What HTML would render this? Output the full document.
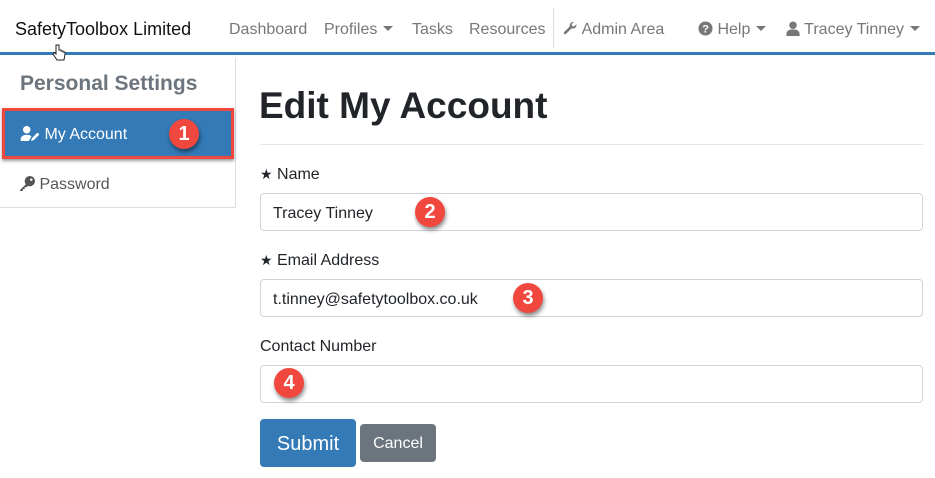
<!DOCTYPE html>
<html><head><meta charset="utf-8"><style>
*{box-sizing:border-box;margin:0;padding:0}
body{width:935px;height:478px;overflow:hidden;background:#fff;font-family:"Liberation Sans",Arial,sans-serif;color:#212529;position:relative}
.abs{position:absolute}
.nav{position:absolute;left:0;top:0;width:935px;height:55px;border-bottom:3px solid #337ab7}
.nav span{position:absolute;top:21px;font-size:16px;color:#777;white-space:nowrap}
.caret{display:inline-block;width:0;height:0;border-left:5px solid transparent;border-right:5px solid transparent;border-top:5px solid #777;vertical-align:3px;margin-left:6px}
.badge{position:absolute;width:30px;height:30px;border-radius:50%;background:#f0483e;color:#fff;font-size:20px;font-weight:bold;text-align:center;line-height:30px;box-shadow:1px 3px 4px rgba(0,0,0,.45)}
.lbl{position:absolute;left:260px;font-size:16px;color:#212529}
.inp{position:absolute;left:260px;width:663px;height:38px;border:1px solid #ced4da;border-radius:4px;font-size:16px;padding:11px 12px 0;color:#212529}
</style></head><body>
<div class="nav">
<span style="left:15px;top:19px;font-size:18px;color:#111">SafetyToolbox Limited</span>
<span style="left:229px">Dashboard</span>
<span style="left:324px">Profiles<i class="caret"></i></span>
<span style="left:412px">Tasks</span>
<span style="left:469px">Resources</span>
<div class="abs" style="left:553px;top:8px;width:1px;height:40px;background:#ddd"></div>
<span style="left:562px"><svg width="16" height="15" viewBox="0 0 16 16" style="vertical-align:-2px"><path d="M15 4a4 4 0 0 1-5.3 3.8L3.5 14a1.5 1.5 0 0 1-2-2L7.7 5.8A4 4 0 0 1 12 1l-2.3 2.3.6 2 2 .6L14.6 3.7c.3.1.4.2.4.3z" fill="#777"/></svg> Admin Area</span>
<span style="left:698px"><svg width="15" height="15" viewBox="0 0 16 16" style="vertical-align:-2px"><circle cx="8" cy="8" r="7.5" fill="#777"/><text x="8" y="12.5" font-size="12" font-weight="bold" fill="#fff" text-anchor="middle" font-family="Liberation Sans">?</text></svg> Help<i class="caret"></i></span>
<span style="left:786px"><svg width="14" height="15" viewBox="0 0 14 16" style="vertical-align:-2px"><circle cx="7" cy="4.5" r="4" fill="#777"/><path d="M0 16v-2a5 5 0 0 1 5-5h4a5 5 0 0 1 5 5v2z" fill="#777"/></svg> Tracey Tinney<i class="caret"></i></span>
</div>
<svg class="abs" style="left:52px;top:44px" width="14" height="18" viewBox="0 0 14 18"><path d="M4 1v9L2 8.5 1 10l4 6h7l1-6V8H11V7H9V6H7V1z" fill="#fff" stroke="#222" stroke-width="1"/></svg>
<!-- sidebar -->
<div class="abs" style="left:0;top:58px;width:236px;height:150px;border-right:1px solid #ddd;border-bottom:1px solid #ddd"></div>
<div class="abs" style="left:20px;top:72px;font-size:21px;color:#6c757d;font-weight:bold">Personal Settings</div>
<div class="abs" style="left:2px;top:108px;width:232px;height:51px;border:3px solid #f0483e;background:#337ab7;box-shadow:0 2px 3px rgba(0,0,0,.4)"></div>
<div class="abs" style="left:20px;top:126px;color:#fff;font-size:16px"><svg width="20" height="15" viewBox="0 0 20 16" style="vertical-align:-2px"><circle cx="6.5" cy="4" r="4" fill="#fff"/><path d="M0 16v-1.5A5 5 0 0 1 5 9.5h3a5 5 0 0 1 3.5 1.5L9 15.5V16z" fill="#fff"/><path d="M11 16l1-3 6-6 2 2-6 6z" fill="#fff"/></svg> My Account</div>
<div class="badge" style="left:169px;top:119px">1</div>
<div class="abs" style="left:20px;top:176px;color:#555;font-size:16px"><svg width="15" height="15" viewBox="0 0 16 16" style="vertical-align:-2px"><circle cx="10.5" cy="5.5" r="5.5" fill="#555"/><path d="M7 8L0 15v1h3v-2h2v-2h2l2-2z" fill="#555"/><circle cx="12" cy="4" r="1.3" fill="#fff"/></svg> Password</div>
<!-- main -->
<div class="abs" style="left:259px;top:85px;font-size:37px;font-weight:bold;color:#212529">Edit My Account</div>
<div class="abs" style="left:260px;top:144px;width:663px;height:1px;background:#e5e5e5"></div>
<div class="lbl" style="top:166px"><span style="font-size:14px">★</span> Name</div>
<div class="inp" style="top:193px">Tracey Tinney</div>
<div class="badge" style="left:415px;top:197px">2</div>
<div class="lbl" style="top:252px"><span style="font-size:14px">★</span> Email Address</div>
<div class="inp" style="top:279px">t.tinney@safetytoolbox.co.uk</div>
<div class="badge" style="left:513px;top:283px">3</div>
<div class="lbl" style="top:338px">Contact Number</div>
<div class="inp" style="top:365px"></div>
<div class="badge" style="left:274px;top:368px">4</div>
<div class="abs" style="left:260px;top:419px;width:96px;height:48px;background:#337ab7;border-radius:4px;color:#fff;font-size:20px;text-align:center;line-height:50px">Submit</div>
<div class="abs" style="left:360px;top:424px;width:76px;height:38px;background:#6c757d;border-radius:4px;color:#fff;font-size:16px;text-align:center;line-height:40px">Cancel</div>
</body></html>
